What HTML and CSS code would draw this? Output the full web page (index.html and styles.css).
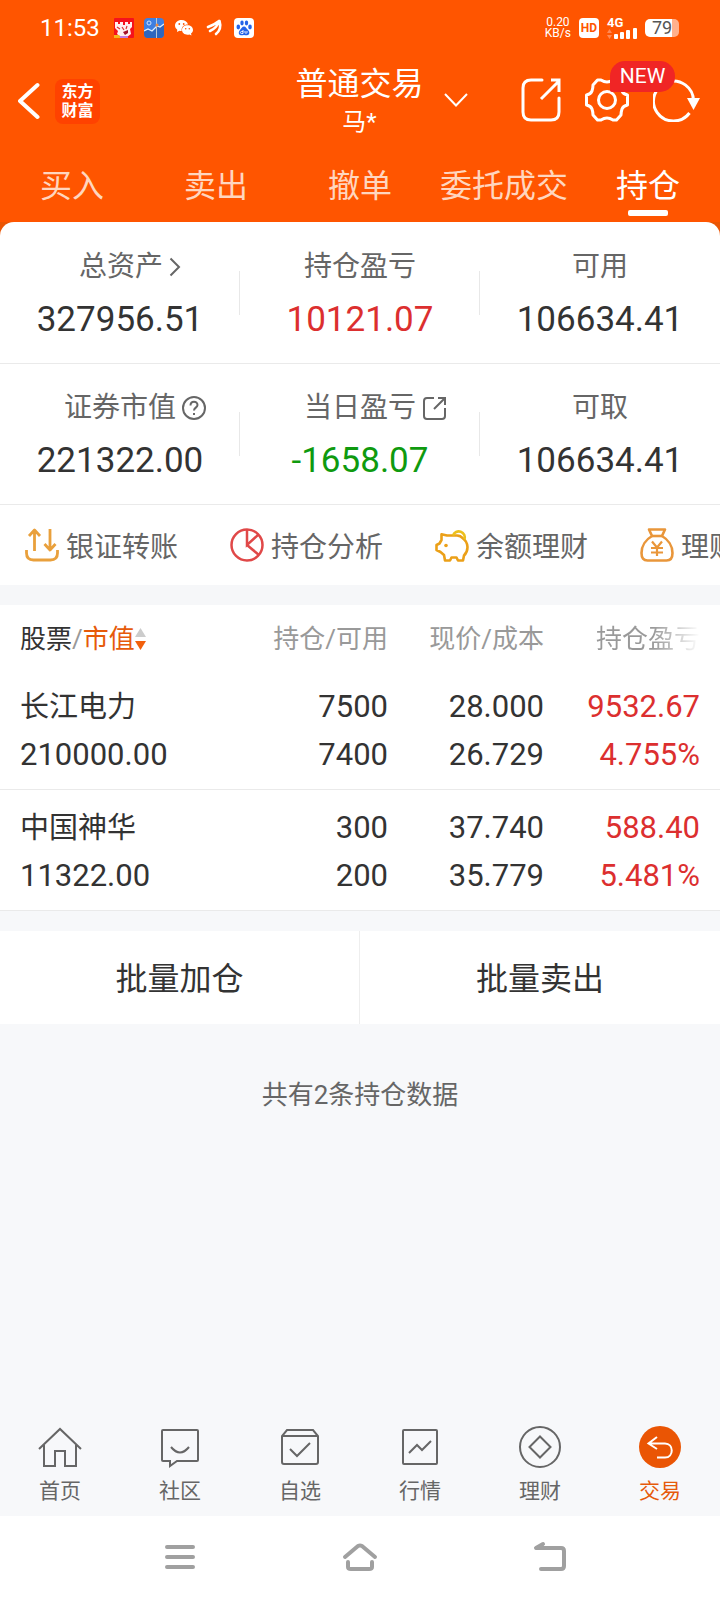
FILE: index.html
```html
<!DOCTYPE html>
<html lang="zh-CN">
<head>
<meta charset="utf-8">
<meta name="viewport" content="width=device-width, initial-scale=1">
<title>普通交易</title>
<link rel="stylesheet" href="styles.css">
</head>
<body>
<div class="app">
  <header class="top">
    <div class="status">
      <div class="status-left">
        <time class="clock">11:53</time>
        <svg width="20" height="20" viewBox="0 0 20 20"><rect width="20" height="20" rx="1" fill="#f5121c"/><path d="M1 4h3v2h2V4h3v3h2V4h3v2h2V4h2v5l-2 2 1 5-4 3H7l-4-3 1-3-3-3z" fill="#fff0f0"/><path d="M3 9l3 2M8 9l2 3M13 8l-1 3" stroke="#d33" stroke-width="1.2"/><path d="M9 14l5-2v3l-3 2z" fill="#a3122a"/><path d="M0 17h5l2 3H0z" fill="#f5b51c"/><path d="M6 18h8v2H6z" fill="#c37be0"/></svg>
        <svg width="20" height="20" viewBox="0 0 20 20"><rect width="20" height="20" rx="4" fill="#3f7fe0"/><path d="M0 13l4-2 4 2 5-5 3 1 4-3v10a4 4 0 0 1-4 4H4a4 4 0 0 1-4-4z" fill="#2f66bd"/><path d="M0 13l4-2 4 2 5-5 3 1 4-3" fill="none" stroke="#dff0ff" stroke-width="1.2"/><path d="M12.500 0v20" stroke="#b9c9d6"/><circle cx="5" cy="5" r="2" fill="none" stroke="#cfe3ff"/><circle cx="13" cy="7" r="1.500" fill="#f08a3c"/></svg>
        <svg width="20" height="20" viewBox="0 0 20 20"><path d="M7.500 2C3.600 2 1 4.500 1 7.600c0 1.800.9 3.200 2.300 4.200L3 14l2.400-1.200c.8.2 1.500.3 2.300.3C7 9 10 6.300 14 6.400 13.300 3.800 10.700 2 7.500 2z" fill="#fff"/><path d="M13.500 7.300c-3.200 0-5.500 2-5.500 4.700s2.400 4.700 5.500 4.700c.7 0 1.300-.1 1.900-.3l2.100 1-.5-1.900c1.300-.8 2-2 2-3.500 0-2.700-2.400-4.700-5.500-4.700z" fill="#fff"/><g fill="#ff5500"><circle cx="5.300" cy="6" r=".9"/><circle cx="9.700" cy="6" r=".9"/><circle cx="11.700" cy="10.700" r=".8"/><circle cx="15.300" cy="10.700" r=".8"/></g></svg>
        <svg width="20" height="20" viewBox="0 0 20 20" fill="none" stroke="#fff" stroke-width="2.600" stroke-linecap="round"><path d="M4 9Q10 7 15 3M6 13Q13 10 15 3M12 16Q18 11 15.500 3"/></svg>
        <svg width="20" height="20" viewBox="0 0 20 20"><rect width="20" height="20" rx="4" fill="#fff"/><g fill="#2463e8"><ellipse cx="4.300" cy="9" rx="1.800" ry="2.400"/><ellipse cx="8" cy="5" rx="1.700" ry="2.400"/><ellipse cx="12.500" cy="5" rx="1.700" ry="2.400"/><ellipse cx="16" cy="9" rx="1.800" ry="2.400"/><path d="M10 8.500c-2 0-2.500 2-4 3.500s-2 5 1 5.200c1 0 2-.3 3-.3s2 .3 3 .3c3-.2 2.800-3.600 1-5.200s-2-3.500-4-3.500z"/></g><path d="M9 12v3.500H7.500c-1.500 0-1.500-2 0-2H9M11 13v1.500c0 1 2 1 2 0V13" fill="none" stroke="#fff" stroke-width=".9"/></svg>
      </div>
      <div class="status-right">
        <div class="speed"><span>0.20</span><span>KB/s</span></div>
        <span class="hd">HD</span>
        <div class="signal">
          <span>4G</span>
          <svg width="30" height="11" viewBox="0 0 30 11"><path d="M0 5l2.500-4L5 5zM0 7l2.500 4L5 7z" fill="#ff8a55"/><g fill="#fff"><rect x="7" y="6" width="4" height="5" rx="1"/><rect x="13" y="4" width="4" height="7" rx="1"/><rect x="19" y="2" width="4" height="9" rx="1"/><rect x="26" y="0" width="4" height="11" rx="1"/></g></svg>
        </div>
        <div class="battery">79</div>
      </div>
    </div>

    <div class="titlebar">
      <div class="title-left">
        <button class="icon-btn" aria-label="返回"><svg width="24" height="38" viewBox="0 0 24 38"><path d="M19.500 3L2 19l17.500 16" fill="none" stroke="#fff" stroke-width="4" stroke-linecap="round" stroke-linejoin="round"/></svg></button>
        <div class="logo"><span>东方</span><span>财富</span></div>
      </div>
      <div class="title-mid">
        <h1>普通交易</h1>
        <p>马*</p>
      </div>
      <div class="title-right">
        <button class="icon-btn" aria-label="切换账户"><svg width="24" height="14" viewBox="0 0 24 14"><path d="M1 1l11 11.500L23 1" fill="none" stroke="#fff" stroke-width="2"/></svg></button>
        <div class="actions">
          <button class="icon-btn" aria-label="分享"><svg width="40" height="44" viewBox="520 79 40 44" fill="none" stroke="#fff" stroke-width="3"><path d="M541 81h-11q-8 0-8 8v24q0 8 8 8h20q8 0 8-8V99" stroke-linecap="round"/><path d="M540 100l17-17M550 81h8v12"/></svg></button>
          <button class="icon-btn gear" aria-label="设置"><svg width="44" height="44" viewBox="-22 -22 44 44" fill="none" stroke="#fff" stroke-width="3" stroke-linejoin="round"><path d="M-20.500-5V5Q-16 6-15 9T-14 15L-9.500 20H-6Q-3 18 0 18T6 20H9.500L14 15Q14 12 15 9T20.500 5V-5Q16-6 15-9T14-15L9.500-20H6Q3-18 0-18T-6-20H-9.500L-14-15Q-14-12-15-9T-20.500-5z"/><circle r="8.500"/></svg><span class="badge">NEW</span></button>
          <button class="icon-btn" aria-label="刷新"><svg width="48" height="44" viewBox="653 79 48 44"><path d="M689.500 114a20 20 0 1 1 4-12" fill="none" stroke="#fff" stroke-width="3"/><path d="M687 99h13l-6.500 12z" fill="#fff"/></svg></button>
        </div>
      </div>
    </div>

    <nav class="tabs">
      <a href="#">买入</a>
      <a href="#">卖出</a>
      <a href="#">撤单</a>
      <a href="#">委托成交</a>
      <a href="#" class="on">持仓</a>
    </nav>
  </header>

  <main>
    <div class="sheet">
      <section class="summary">
        <div class="cell">
          <div class="label">总资产<svg class="arrow" width="12" height="20" viewBox="0 0 12 20"><path d="M1.500 1.500L10 10l-8.500 8.500" fill="none" stroke="#666" stroke-width="2"/></svg></div>
          <div class="value">327956.51</div>
        </div>
        <div class="cell">
          <div class="label">持仓盈亏</div>
          <div class="value up">10121.07</div>
        </div>
        <div class="cell">
          <div class="label">可用</div>
          <div class="value">106634.41</div>
        </div>
        <div class="cell">
          <div class="label">证券市值<svg width="24" height="24" viewBox="0 0 24 24" fill="none" stroke="#666" stroke-width="2"><circle cx="12" cy="12" r="11"/><path d="M8.500 9.500C8.500 4.500 15.500 4.800 15.500 9c0 2.500-3.500 2.800-3.500 5.500M12 17v2"/></svg></div>
          <div class="value">221322.00</div>
        </div>
        <div class="cell">
          <div class="label">当日盈亏<svg width="24" height="24" viewBox="0 0 24 24" fill="none" stroke="#666" stroke-width="2"><path d="M12 2H5Q2 2 2 5v15q0 3 3 3h15q3 0 3-3v-8M12 13L22 3M16 2h7v7"/></svg></div>
          <div class="value down">-1658.07</div>
        </div>
        <div class="cell">
          <div class="label">可取</div>
          <div class="value">106634.41</div>
        </div>
      </section>
      <nav class="quick">
        <a href="#"><svg width="34" height="34" viewBox="0 0 34 34" fill="none" stroke="#e9a03c" stroke-width="2.800"><path d="M1.500 22v3q0 7 7 7h17q7 0 7-7v-3M9.500 23V2M4 8l5.500-6L15 8M25 1v20M19.500 16l5.500 6 5.500-6" stroke-linejoin="round"/></svg><span>银证转账</span></a>
        <a href="#"><svg width="34" height="34" viewBox="0 0 34 34" fill="none" stroke="#e04848" stroke-width="2.500"><circle cx="17" cy="17" r="15.500"/><path d="M17 1.500V17L28.500 6.500M17 17l12 10"/></svg><span>持仓分析</span></a>
        <a href="#"><svg width="34" height="34" viewBox="0 0 34 34" fill="none" stroke="#eba018" stroke-width="2.600" stroke-linejoin="round"><path d="M12 7.500L6.500 6.200V12L4.500 15.500 1.500 17v5l4 2 3.500 3 1 5.500h5l1.500-3h5L23 32.500h5l1-5c5-5 4.500-13-1-17Q25.500 7.500 22 7.500z"/><path d="M18 7.500a6 6 0 1 1 11.500 4" stroke="#ecc01d"/><circle cx="11" cy="17.500" r="1.800" fill="#eba018" stroke="none"/></svg><span>余额理财</span></a>
        <a href="#"><svg width="34" height="34" viewBox="0 0 34 34" fill="none" stroke="#e9963a" stroke-width="2.600" stroke-linejoin="round"><path d="M9 1.500h16l-3 6.500c6 3.500 10.500 10 10.500 17 0 5-2 7.500-6 7.500h-19c-4 0-6-2.500-6-7.500 0-7 4.500-13.500 10.500-17z"/><path d="M11.500 8h11"/><path d="M12 13.500l5 6 5-6M17 19.500V28M11 20h12M11 24.500h12" stroke-width="2.200"/></svg><span>理财产品</span></a>
      </nav>
    </div>

    <table class="holdings">
      <thead>
        <tr>
          <th scope="col"><div class="sort"><span class="dark">股票</span>/<span class="hot">市值</span><svg width="11" height="24" viewBox="0 0 11 24"><path d="M0 10L5.500 1 11 10z" fill="#ccc"/><path d="M0 14h11l-5.500 9z" fill="#f2600c"/></svg></div></th>
          <th scope="col">持仓/可用</th>
          <th scope="col">现价/成本</th>
          <th scope="col"><span class="fade">持仓盈亏</span></th>
        </tr>
      </thead>
      <tbody>
        <tr>
          <td><div class="name">长江电力</div><div>210000.00</div></td>
          <td><div>7500</div><div>7400</div></td>
          <td><div>28.000</div><div>26.729</div></td>
          <td class="up"><div>9532.67</div><div>4.755%</div></td>
        </tr>
        <tr>
          <td><div class="name">中国神华</div><div>11322.00</div></td>
          <td><div>300</div><div>200</div></td>
          <td><div>37.740</div><div>35.779</div></td>
          <td class="up"><div>588.40</div><div>5.481%</div></td>
        </tr>
      </tbody>
    </table>

    <div class="batch">
      <button>批量加仓</button>
      <button>批量卖出</button>
    </div>
    <p class="count">共有2条持仓数据</p>
  </main>

  <nav class="dock">
    <a href="#"><svg width="44" height="44" viewBox="0 0 44 44"><path d="M1 23L22 3l21 20M6 19v21h11V25h10v15h11V19"/></svg>首页</a>
    <a href="#"><svg width="44" height="44" viewBox="0 0 44 44"><path d="M5 4h34q1 0 1 1v29q0 1-1 1H19l-7 5v-5H5q-1 0-1-1V5q0-1 1-1zM13 21q9 11 18 0"/></svg>社区</a>
    <a href="#"><svg width="44" height="44" viewBox="0 0 44 44"><path d="M9 4h26l5 6v26q0 2-2 2H6q-2 0-2-2V10zM4 10h36M12 23l7 7 13-13"/></svg>自选</a>
    <a href="#"><svg width="44" height="44" viewBox="0 0 44 44"><rect x="5" y="4" width="34" height="34" rx="1"/><path d="M11 27l8-8 5 5 9-9"/></svg>行情</a>
    <a href="#"><svg width="44" height="44" viewBox="0 0 44 44"><circle cx="22" cy="21" r="20"/><path d="M22 10.500L32.500 21 22 31.500 11.500 21z"/></svg>理财</a>
    <a href="#" class="on"><svg width="44" height="44" viewBox="0 0 44 44"><circle cx="22" cy="21" r="21" fill="#ea5504" stroke="none"/><path d="M19 11l-8.500 6.500L19 23M11 17.500h16c9 0 9 14 0 14h-8" stroke="#fff"/></svg>交易</a>
  </nav>

  <nav class="system">
    <button class="icon-btn" aria-label="最近任务"><svg width="30" height="26" viewBox="0 0 30 26"><path d="M2 3h26M2 13h26M2 23h26"/></svg></button>
    <button class="icon-btn" aria-label="主屏幕"><svg width="40" height="32" viewBox="0 0 40 32"><path d="M5 16L18 5q2-1 4 0l13 11M8 21v5q0 2 3 2h18q3 0 3-2v-5"/></svg></button>
    <button class="icon-btn" aria-label="返回上一级"><svg width="54" height="32" viewBox="-20 0 54 32"><path d="M10 3L3 7h25q3 0 3 3v15q0 3-3 3H8"/></svg></button>
  </nav>
</div>
</body>
</html>
```
FILE: styles.css
```css
* {
  box-sizing: border-box;
}

body {
  margin: 0;
  font-family: Roboto, "Noto Sans CJK SC", sans-serif;
  color: #333;
  background: #f7f8fa;
}

h1,
p {
  margin: 0;
  font-weight: 400;
}

a {
  color: inherit;
  text-decoration: none;
}

button {
  margin: 0;
  padding: 0;
  border: 0;
  background: none;
  color: inherit;
  font: inherit;
}

svg {
  display: block;
  flex: none;
}

.icon-btn {
  display: flex;
  position: relative;
}

.app {
  display: flex;
  flex-direction: column;
  min-height: 100vh;
}

main {
  flex: 1;
}

.up {
  color: #dc2f2f;
}

.down {
  color: #0f9a0f;
}

/* Header */
.top {
  background: #ff5500;
  color: #fff;
}

.status {
  display: flex;
  justify-content: space-between;
  align-items: center;
  height: 56px;
  padding: 0 41px 0 40px;
}

.status-left {
  display: flex;
  align-items: center;
  gap: 10px;
}

.clock {
  margin-right: 4px;
  font-size: 24px;
  line-height: 28px;
}

.status-right {
  display: flex;
  align-items: center;
  gap: 8px;
}

.speed {
  display: flex;
  flex-direction: column;
  align-items: center;
  font-size: 12px;
  line-height: 11px;
}

.hd {
  width: 20px;
  border-radius: 4px;
  background: #fff;
  color: #ff5500;
  font-size: 12px;
  font-weight: 700;
  line-height: 20px;
  text-align: center;
}

.signal {
  font-size: 13px;
  font-weight: 700;
  line-height: 10px;
}

.battery {
  width: 34px;
  border-radius: 5px;
  background: linear-gradient(90deg, #fff 80%, #ffb08c 80%);
  color: #555;
  font-size: 18px;
  line-height: 18px;
  text-align: center;
}

.titlebar {
  display: grid;
  grid-template-columns: 1fr auto 1fr;
  align-items: center;
  height: 92px;
  padding: 0 19px 0 18px;
}

.title-left {
  display: flex;
  align-items: center;
  gap: 13px;
  padding-bottom: 2px;
}

.logo {
  display: flex;
  flex-direction: column;
  justify-content: center;
  width: 45px;
  height: 45px;
  border-radius: 8px;
  background: #ff4200;
  font-size: 16px;
  font-weight: 700;
  line-height: 19px;
  text-align: center;
}

.title-mid {
  text-align: center;
}

.title-mid h1 {
  font-size: 32px;
  line-height: 40px;
}

.title-mid p {
  font-size: 24px;
  line-height: 36px;
}

.title-right {
  display: flex;
  align-items: center;
  justify-content: space-between;
  padding: 0 0 4px 20px;
}

.actions {
  display: flex;
  gap: 24px;
}

.badge {
  position: absolute;
  left: 25px;
  bottom: 30px;
  z-index: 1;
  width: 65px;
  border-radius: 15px 15px 15px 2px;
  background: #f02525;
  font-size: 21px;
  line-height: 31px;
  text-align: center;
}

.tabs {
  display: grid;
  grid-template-columns: repeat(5, 1fr);
  height: 74px;
  padding-top: 18px;
  color: #ffd6bf;
  font-size: 32px;
  line-height: 40px;
  text-align: center;
  white-space: nowrap;
}

.tabs .on {
  color: #fff;
}

.tabs .on::after {
  content: "";
  display: block;
  width: 40px;
  height: 6px;
  margin: 4px auto 0;
  border-radius: 2px;
  background: #fff;
}

/* Account summary */
.sheet {
  background: linear-gradient(#ea5504 20px, #fff 20px);
}

.summary {
  display: grid;
  grid-template-columns: repeat(3, 1fr);
  padding-top: 1px;
  border-radius: 14px 14px 0 0;
  background: #fff;
}

.cell {
  position: relative;
  height: 141px;
  padding-top: 26px;
  border-bottom: 1px solid #eaeaea;
  text-align: center;
}

.cell:not(:nth-child(3n))::after {
  content: "";
  position: absolute;
  top: 48px;
  right: 0;
  width: 1px;
  height: 44px;
  background: #e8e8e8;
}

.label {
  display: flex;
  align-items: center;
  justify-content: center;
  gap: 6px;
  height: 36px;
  color: #666;
  font-size: 28px;
  line-height: 36px;
}

/* Trailing icons hang outside, so the words stay centred */
.label svg {
  margin-right: -30px;
}

.label .arrow {
  margin-right: -20px;
}

.value {
  margin-top: 14px;
  font-size: 35px;
  line-height: 42px;
}

.quick {
  display: flex;
  gap: 52px;
  height: 80px;
  padding-left: 25px;
  overflow: hidden;
  color: #666;
  font-size: 28px;
  line-height: 40px;
  white-space: nowrap;
}

.quick a {
  display: flex;
  flex: none;
  align-items: center;
  gap: 7px;
}

.quick span {
  padding-top: 6px;
}

/* Holdings */
.holdings {
  width: 100%;
  border-top: 20px solid #f6f7f9;
  border-collapse: separate;
  border-spacing: 0;
  table-layout: fixed;
  background: #fff;
  font-size: 31px;
  line-height: 48px;
  text-align: right;
}

.holdings th {
  width: 156px;
  height: 67px;
  padding: 0;
  color: #999;
  font-size: 26px;
  font-weight: 400;
  line-height: 36px;
  white-space: nowrap;
}

.holdings th:first-child,
.holdings td:first-child {
  width: auto;
  padding-left: 20px;
  text-align: left;
}

.holdings th:last-child,
.holdings td:last-child {
  width: 176px;
  padding-right: 20px;
}

.holdings td {
  padding: 14px 0 10px;
  border-bottom: 1px solid #eaeaea;
}

.holdings tbody tr:first-child td {
  padding-top: 11px;
}

.name {
  font-size: 29px;
}

.sort {
  display: flex;
  align-items: center;
}

.dark {
  color: #333;
}

.hot {
  color: #e65a0a;
}

.fade {
  background: linear-gradient(90deg, #999 55%, #fff);
  background-clip: text;
  -webkit-background-clip: text;
  color: transparent;
}

.batch {
  display: grid;
  grid-template-columns: repeat(2, 1fr);
  margin-top: 20px;
  background: #fff;
}

.batch button {
  height: 93px;
  padding-bottom: 4px;
  font-size: 32px;
}

.batch button:first-child {
  border-right: 1px solid #eee;
}

.count {
  padding-top: 53px;
  color: #666;
  font-size: 26px;
  line-height: 36px;
  text-align: center;
}

/* Bottom navigation */
.dock {
  display: grid;
  grid-template-columns: repeat(6, 1fr);
  padding-bottom: 9px;
  color: #666;
  font-size: 21px;
  line-height: 32px;
}

.dock a {
  display: flex;
  flex-direction: column;
  align-items: center;
  gap: 5px;
}

.dock svg {
  fill: none;
  stroke: #666;
  stroke-width: 2;
}

.dock .on {
  color: #e65a0a;
}

.system {
  display: grid;
  grid-template-columns: repeat(3, 1fr);
  align-items: center;
  justify-items: center;
  height: 84px;
  padding: 0 90px 2px;
  background: #fff;
}

.system svg {
  fill: none;
  stroke: #a0a0a0;
  stroke-width: 4;
  stroke-linecap: round;
  stroke-linejoin: round;
}
```
